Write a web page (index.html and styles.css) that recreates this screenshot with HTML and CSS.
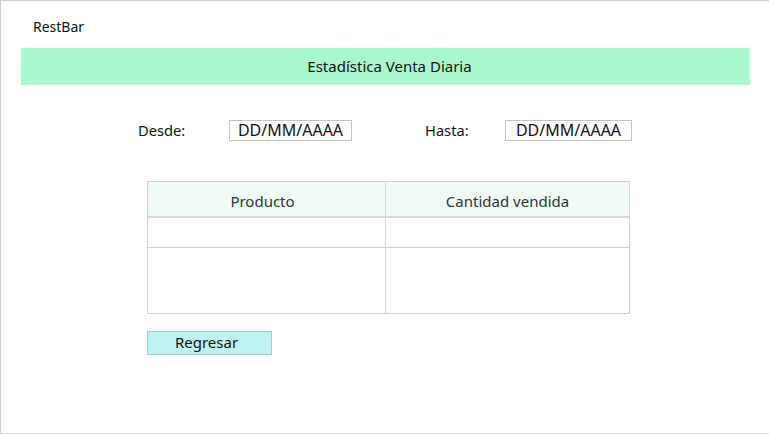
FILE: index.html
```html
<!DOCTYPE html>
<html lang="es">
<head>
<meta charset="utf-8">
<title>RestBar</title>
<link rel="stylesheet" href="styles.css">
</head>
<body>
<div class="frame">
  <div class="brand">RestBar</div>
  <div class="titlebar">Estadística Venta Diaria</div>
  <div class="filters">
    <span class="label label-desde">Desde:</span>
    <span class="datebox box-desde">DD/MM/AAAA</span>
    <span class="label label-hasta">Hasta:</span>
    <span class="datebox box-hasta">DD/MM/AAAA</span>
  </div>
  <div class="table">
    <div class="row head">
      <div class="cell c1">Producto</div>
      <div class="cell c2">Cantidad vendida</div>
    </div>
    <div class="row r1">
      <div class="cell c1"></div>
      <div class="cell c2"></div>
    </div>
    <div class="row r2">
      <div class="cell c1"></div>
      <div class="cell c2"></div>
    </div>
  </div>
  <button class="btn">Regresar</button>
</div>
</body>
</html>
```
FILE: styles.css
```css
html, body {
  margin: 0;
  padding: 0;
  background: #ffffff;
}
body {
  font-family: "Noto Sans", "Open Sans", sans-serif;
  color: #111;
}
.frame {
  box-sizing: border-box;
  width: 769px;
  height: 434px;
  border-left: 1px solid #cfcfcf;
  border-top: 1px solid #cfcfcf;
  border-bottom: 1px solid #cfcfcf;
  padding: 16px 0 0 20px;
}
.brand {
  font-size: 14px;
  line-height: 19px;
  height: 19px;
  padding-left: 12px;
}
.titlebar {
  box-sizing: border-box;
  margin-top: 12px;
  width: 729px;
  height: 37px;
  padding-left: 8px;
  background: #a9f8cd;
  font-size: 15px;
  line-height: 37px;
  text-align: center;
  color: #111;
}
.filters {
  display: flex;
  align-items: center;
  margin-top: 35px;
  height: 21px;
  font-size: 14.7px;
}
.label {
  line-height: 21px;
}
.label-desde {
  margin-left: 117px;
  width: 91px;
}
.label-hasta {
  margin-left: 73px;
  width: 80px;
}
.datebox {
  box-sizing: border-box;
  height: 21px;
  border: 1px solid #c4c4c4;
  line-height: 19px;
  text-align: center;
  font-size: 16px;
}
.box-desde { width: 123px; }
.box-hasta { width: 127px; }
.table {
  margin-top: 40px;
  margin-left: 126px;
  width: 483px;
  border: 1px solid #d0d0d0;
  box-sizing: border-box;
}
.row {
  display: flex;
}
.row.head {
  height: 34px;
  background: #f0fbf8;
  border-bottom: 2px solid #d6d6d6;
  color: #333;
}
.row.r1 {
  height: 29px;
  border-bottom: 1px solid #d4d4d4;
}
.row.r2 { height: 65px; }
.cell {
  font-size: 15px;
  display: flex;
  align-items: center;
  justify-content: center;
  box-sizing: border-box;
}
.head .cell {
  padding-top: 4px;
}
.head .c1 {
  padding-right: 8px;
}
.c1 {
  width: 238px;
  border-right: 1px solid #d4d4d4;
}
.c2 {
  flex: 1;
}
.btn {
  display: block;
  margin-top: 17px;
  margin-left: 126px;
  width: 125px;
  height: 24px;
  box-sizing: border-box;
  background: #bcf2f1;
  border: 1px solid #9fcfcd;
  font-family: "Noto Sans", "Open Sans", sans-serif;
  font-size: 15px;
  color: #111;
  padding: 0 6px 2px 0;
  line-height: 20px;
}
```
